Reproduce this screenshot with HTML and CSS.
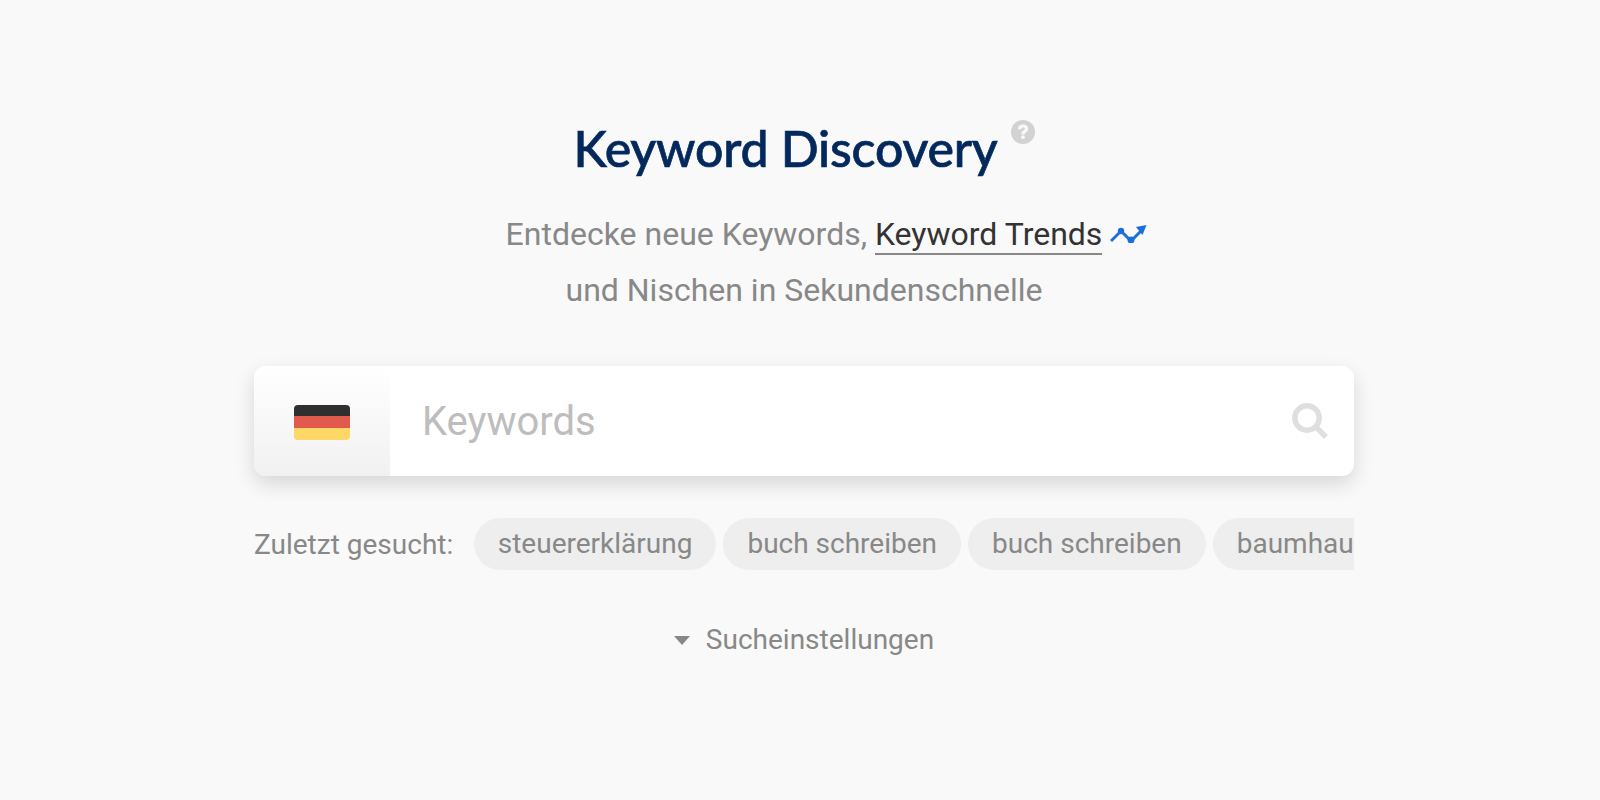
FILE: index.html
```html
<!DOCTYPE html>
<html lang="de">
<head>
  <meta charset="UTF-8" />
  <title>Keyword Discovery</title>
  <link rel="stylesheet" href="styles.css">
</head>
<body>
  <div class="container">
    <h1 class="title">
      <span>Keyword Discovery</span>
      <svg class="help" viewBox="0 0 24 24"><circle cx="12" cy="12" r="12" fill="#d2d2d2"/><path d="M7 9.200C7 6.200 9.300 4.600 12.100 4.600c2.900 0 5.100 1.700 5.100 4.200 0 2-1.100 2.900-2.300 3.700-.9.600-1.200 1-1.200 1.900h-3.400c0-2 .6-3 2-3.900 1-.6 1.500-1 1.500-1.600 0-.8-.7-1.300-1.700-1.300-1.100 0-1.700.7-1.800 1.700z" fill="#f9f9f9"/><rect x="10.300" y="15.400" width="3.400" height="3.400" rx=".6" fill="#f9f9f9"/></svg>
    </h1>
    <p class="subtitle">
      Entdecke neue Keywords, <span class="trend-wrap"><a class="trend-link">Keyword Trends</a><svg class="trend-icon" viewBox="0 0 37 20"><path d="M1 18 11 8 21 18 33 6" fill="none" stroke="#1a6fdc" stroke-width="3"/><circle cx="11" cy="8" r="3.200" fill="#1a6fdc"/><circle cx="21" cy="17" r="3.500" fill="#1a6fdc"/><path d="M26 4 36.500 2 32.500 12z" fill="#1a6fdc"/></svg></span><br>
      und Nischen in Sekundenschnelle
    </p>

    <div class="search">
      <div class="country">
        <div class="flag"><span class="black"></span><span class="red"></span><span class="gold"></span></div>
      </div>
      <div class="search-input">Keywords</div>
      <svg class="search-icon" viewBox="0 0 36 37"><circle cx="15" cy="15" r="12.200" fill="none" stroke="#dfdfdf" stroke-width="5.500"/><path d="M24 24 34 34" fill="none" stroke="#dfdfdf" stroke-width="5.500"/></svg>
    </div>

    <div class="recent">
      <span class="recent-label">Zuletzt gesucht:</span>
      <div class="chips">
        <span class="chip">steuererklärung</span>
        <span class="chip">buch schreiben</span>
        <span class="chip">buch schreiben</span>
        <span class="chip">baumhaus</span>
      </div>
    </div>

    <div class="settings"><span class="caret"></span>Sucheinstellungen</div>
  </div>
</body>
</html>
```

FILE: styles.css
```css
* {
  box-sizing: border-box;
}

body {
  margin: 0;
  padding-left: 8px;
  background: #f9f9f9;
  font-family: Roboto, sans-serif;
  color: #888;
  min-height: 100vh;
}

.container {
  width: 1100px;
  margin: 0 auto;
  padding-top: 117px;
}

.title {
  margin: 0;
  display: flex;
  justify-content: center;
  align-items: flex-start;
  font-family: Lato, sans-serif;
  font-size: 50px;
  font-weight: 500;
  line-height: 62px;
  letter-spacing: -0.2px;
  color: #03295c;
  -webkit-text-stroke: 0.7px #03295c;
}

.help {
  width: 24px;
  height: 24px;
  margin: 3px 0 0 13px;
}

.subtitle {
  margin: 27px 0 0;
  text-align: center;
  font-size: 32px;
  line-height: 56px;
}

.trend-wrap {
  position: relative;
}

.trend-link {
  color: #333;
  border-bottom: 2px solid #888;
}

.trend-icon {
  position: absolute;
  left: 100%;
  top: 8px;
  margin-left: 8px;
  width: 37px;
  height: 20px;
}

.search {
  display: flex;
  align-items: center;
  height: 110px;
  margin-top: 48px;
  background: #fff;
  border-radius: 12px;
  box-shadow: 0 8px 20px rgba(0, 0, 0, 0.14);
  overflow: hidden;
}

.country {
  display: flex;
  align-items: center;
  justify-content: center;
  width: 136px;
  height: 100%;
  padding-top: 2px;
  background: linear-gradient(#fff, #f1f1f1);
}

.flag {
  display: flex;
  flex-direction: column;
  width: 56px;
  height: 35px;
  border-radius: 4px;
  overflow: hidden;
}

.flag span {
  flex: 1;
}

.black { background: #2f2f2f; }
.red { background: #e25a4e; }
.gold { background: #ffd767; }

.search-input {
  flex: 1;
  padding-left: 32px;
  font-size: 40px;
  color: #bdbdbd;
}

.search-icon {
  width: 36px;
  height: 37px;
  margin-right: 26px;
}

.recent {
  display: flex;
  align-items: center;
  margin-top: 42px;
  font-size: 28px;
}

.recent-label {
  flex: none;
  margin-right: 20.5px;
}

.chips {
  display: flex;
  gap: 7px;
  flex: 1;
  overflow: hidden;
}

.chip {
  flex: none;
  height: 52px;
  line-height: 52px;
  padding: 0 24px;
  border-radius: 26px;
  background: #eee;
}

.settings {
  display: flex;
  align-items: center;
  justify-content: center;
  margin-top: 44px;
  font-size: 28px;
  line-height: 52px;
}

.caret {
  width: 0;
  height: 0;
  margin-right: 16px;
  border-left: 8px solid transparent;
  border-right: 8px solid transparent;
  border-top: 9px solid #888;
}
```
